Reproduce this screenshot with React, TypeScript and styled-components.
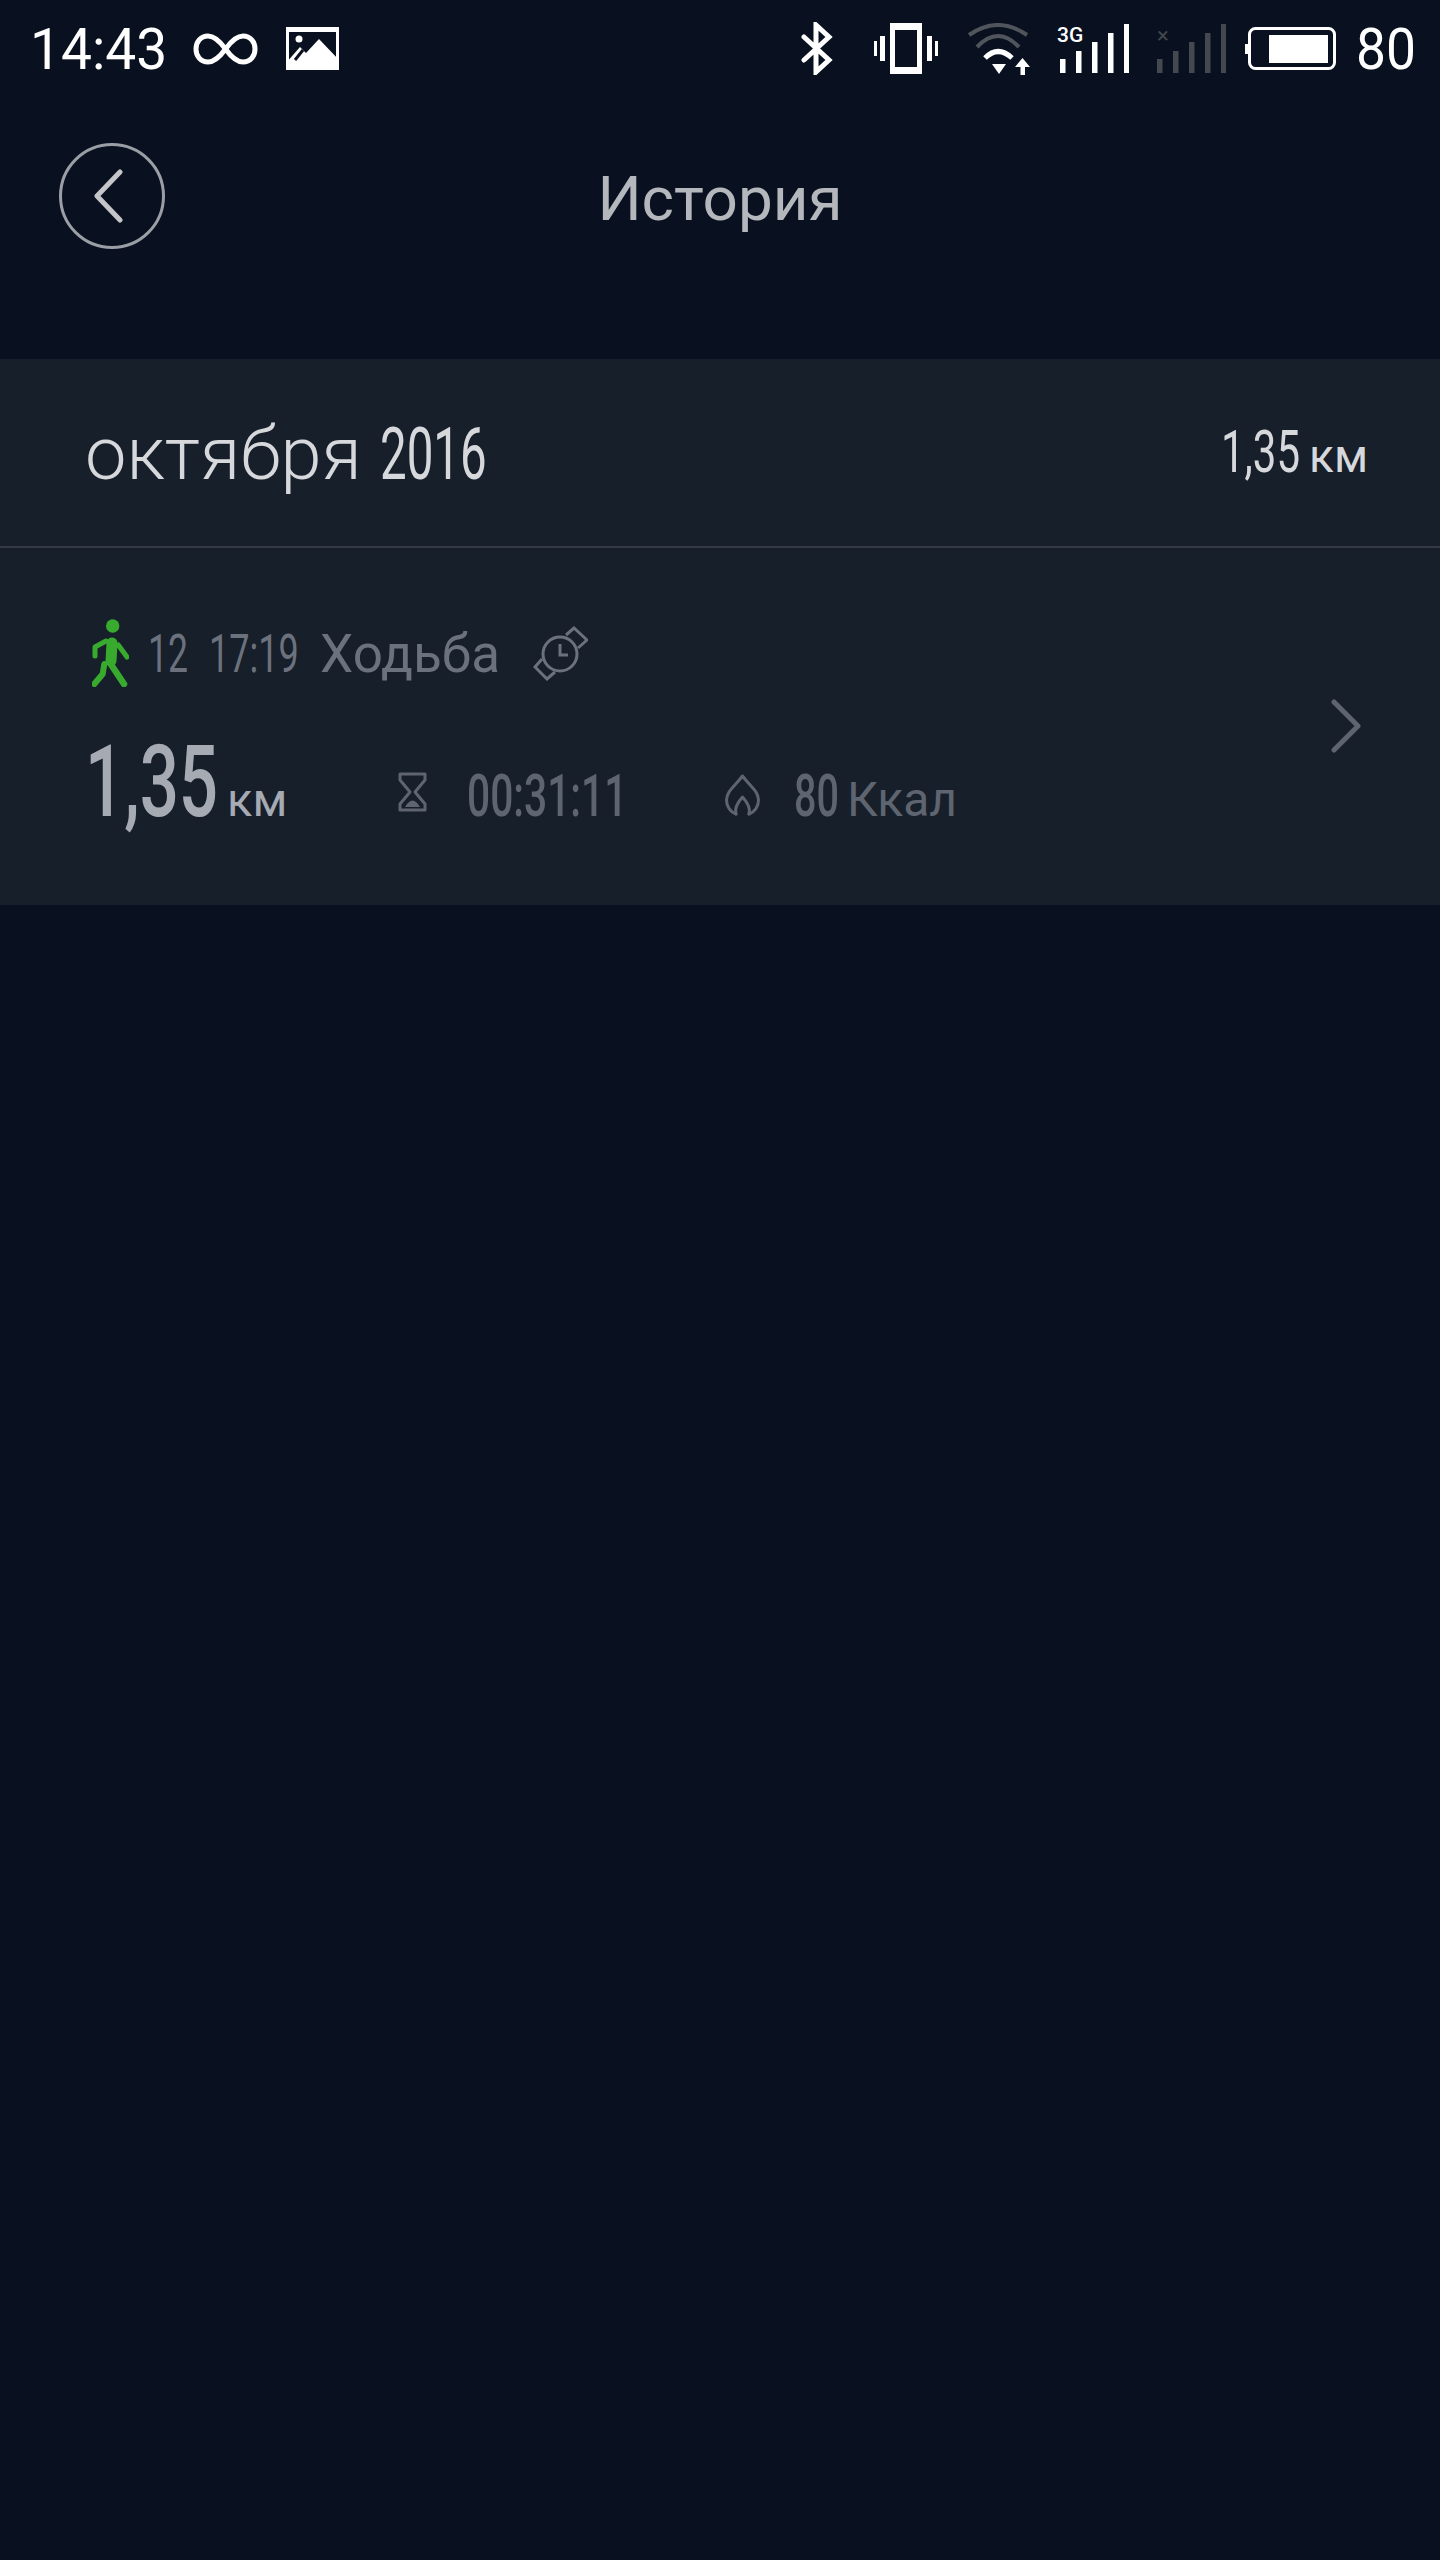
import React from "react";
import styled, { createGlobalStyle } from "styled-components";

const Global = createGlobalStyle`
  html, body { margin: 0; padding: 0; background: #09101f; }
  body { font-family: Roboto, "Noto Sans", sans-serif; }
`;

const Page = styled.div`
  width: 1440px;
  height: 2560px;
  background: #09101f;
  overflow: hidden;
`;

const StatusBar = styled.div`
  height: 97px;
  display: flex;
  align-items: center;
  justify-content: space-between;
  padding: 0 24px 0 30px;
  color: #fff;
`;

const StatusGroup = styled.div`
  display: flex;
  align-items: center;
`;

const Squeezed = styled.span<{ $w: number; $sx: number; $wt?: number }>`
  display: inline-block;
  width: ${(p) => p.$w}px;
  white-space: nowrap;
  font-weight: ${(p) => p.$wt ?? 500};
  transform: scaleX(${(p) => p.$sx});
  transform-origin: left center;
`;

const StatusText = styled.div`
  font-size: 58px;
  line-height: 60px;
`;

const StatusIcon = styled.svg<{ $ml?: number }>`
  display: block;
  flex: none;
  margin-left: ${(p) => p.$ml ?? 0}px;
`;

const Signal = styled.div<{ $ml: number }>`
  position: relative;
  flex: none;
  width: 72px;
  height: 50px;
  margin-left: ${(p) => p.$ml}px;
`;

const SignalBadge = styled.span<{ $dim?: boolean }>`
  position: absolute;
  left: ${(p) => (p.$dim ? 3 : 0)}px;
  top: ${(p) => (p.$dim ? 0 : -1)}px;
  font-size: ${(p) => (p.$dim ? 22 : 21)}px;
  font-weight: ${(p) => (p.$dim ? 400 : 500)};
  line-height: 24px;
  color: ${(p) => (p.$dim ? "#44484f" : "#fff")};
`;

const Header = styled.header`
  height: 262px;
  box-sizing: border-box;
  padding: 46px 59px 0;
  display: grid;
  grid-template-columns: 1fr auto 1fr;
  align-items: start;
`;

const BackButton = styled.div`
  width: 106px;
  height: 106px;
  box-sizing: border-box;
  border: 3px solid #9a9ea5;
  border-radius: 50%;
  display: flex;
  align-items: center;
  justify-content: center;
  padding-right: 6px;
`;

const Title = styled.h1`
  margin: 0;
  padding-top: 3px;
  font-size: 62px;
  font-weight: 400;
  line-height: 106px;
  color: #b4b7bc;
`;

const MonthBar = styled.div`
  height: 189px;
  box-sizing: border-box;
  background: #171f2b;
  border-bottom: 2px solid #333a46;
  padding: 3px 72px 0 85px;
  display: flex;
  align-items: center;
  justify-content: space-between;
  color: #d6d8dc;
`;

const MonthLabel = styled.div`
  display: flex;
  align-items: baseline;
  font-size: 74px;
  font-weight: 350;
  line-height: 100px;
`;

const MonthYear = styled.span`
  font-size: 73px;
  margin-left: 18px;
`;

const MonthTotal = styled.div`
  display: flex;
  align-items: baseline;
  font-size: 60px;
  line-height: 80px;
`;

const Unit = styled.span<{ $size: number; $ml: number }>`
  font-size: ${(p) => p.$size}px;
  margin-left: ${(p) => p.$ml}px;
`;

const ActivityRow = styled.div`
  height: 357px;
  box-sizing: border-box;
  background: #171f2b;
  padding: 70px 0 0 85px;
  position: relative;
`;

const TopLine = styled.div`
  height: 70px;
  display: flex;
  align-items: center;
  color: #6c727d;
  font-size: 53px;
  line-height: 70px;
`;

const Spaced = styled.span<{ $ml: number }>`
  margin-left: ${(p) => p.$ml}px;
`;

const TopIcon = styled.svg<{ $ml: number }>`
  display: block;
  flex: none;
  margin-left: ${(p) => p.$ml}px;
`;

const TopText = styled.span`
  position: relative;
  top: 1px;
`;

const BottomLine = styled.div`
  margin-top: 44px;
  display: flex;
  align-items: baseline;
  line-height: 100px;
`;

const Distance = styled.div`
  display: flex;
  align-items: baseline;
  color: #a6aab2;
  font-size: 100px;
  width: 313px;
`;

const Metric = styled.div<{ $w: number }>`
  display: flex;
  align-items: baseline;
  width: ${(p) => p.$w}px;
  color: #5f6570;
  font-size: 59px;
`;

const MetricIcon = styled.svg`
  display: block;
  flex: none;
  align-self: flex-end;
  margin-bottom: 34px;
`;

const Chevron = styled.svg`
  position: absolute;
  right: 79px;
  top: 151px;
`;

const Bars = ({ color }: { color: string }) => (
  <StatusIcon width={72} height={50} viewBox="0 0 72 50">
    {[35, 27, 18, 9, 0].map((top, i) => (
      <rect key={i} x={3 + i * 16} y={top} width={5.5} height={49 - top} fill={color} />
    ))}
  </StatusIcon>
);

export default function App() {
  return (
    <Page>
      <Global />
      <StatusBar>
        <StatusGroup>
          <StatusText>
            <Squeezed $w={137} $sx={0.95} $wt={400}>14:43</Squeezed>
          </StatusText>
          <StatusIcon $ml={26} width={65} height={32} viewBox="0 0 65 32" fill="none" stroke="#fff" strokeWidth={5}>
            <path d="M32.5 16C26 7 21 3 15 3 7.5 3 3 9 3 16s4.5 13 12 13c6 0 11-4 17.500-13C39 7 44 3 50 3c7.500 0 12 6 12 13s-4.500 13-12 13c-6 0-11-4-17.500-13Z" />
          </StatusIcon>
          <StatusIcon $ml={28} width={53} height={43} viewBox="0 0 53 43">
            <rect width={53} height={43} fill="#fff" />
            <rect x={3} y={5} width={47} height={28} fill="#09101f" />
            <path d="M0 43V36L14 20 20 26 33 12 53 33V43Z" fill="#fff" />
            <circle cx={13} cy={12} r={3.500} fill="#fff" />
            <path d="M9 33 17 23" stroke="#09101f" strokeWidth={3} />
          </StatusIcon>
        </StatusGroup>
        <StatusGroup>
          <StatusIcon width={32} height={53} viewBox="0 0 32 53" fill="none" stroke="#fff" strokeWidth={5} strokeLinecap="round">
            <path d="M3 15 28 38 15 50V3L28 15 3 38" />
          </StatusIcon>
          <StatusIcon $ml={41} width={64} height={51} viewBox="0 0 64 51" fill="#fff">
            <path d="M16 0H48V51H16ZM21 7V44H43V7Z" fillRule="evenodd" />
            <rect x={0} y={18} width={3} height={15} />
            <rect x={6} y={13} width={5} height={25} />
            <rect x={53} y={13} width={5} height={25} />
            <rect x={61} y={18} width={3} height={15} />
          </StatusIcon>
          <StatusIcon $ml={29} width={64} height={52} viewBox="0 0 64 52" fill="none">
            <path d="M2 12Q31-8 60 12" stroke="#50555c" strokeWidth={4} />
            <path d="M10 24Q31 2 52 24" stroke="#50555c" strokeWidth={4} />
            <path d="M18 35Q31 22 45 35" stroke="#fff" strokeWidth={5} />
            <path d="M25 41H39L32 51Z" fill="#fff" />
            <path d="M48 44 55.500 35 63 44H58V52H53.500V44Z" fill="#fff" />
          </StatusIcon>
          <Signal $ml={26}>
            <Bars color="#fff" />
            <SignalBadge>3G</SignalBadge>
          </Signal>
          <Signal $ml={25}>
            <Bars color="#44484f" />
            <SignalBadge $dim>×</SignalBadge>
          </Signal>
          <StatusIcon $ml={19} width={91} height={43} viewBox="0 0 91 43">
            <rect x={4.500} y={1.500} width={85} height={40} rx={6} fill="none" stroke="#fff" strokeWidth={3} />
            <rect x={0} y={17} width={3} height={10} fill="#fff" />
            <rect x={24} y={8} width={59} height={28} fill="#fff" />
          </StatusIcon>
          <StatusText>
            <Spaced $ml={20}>
              <Squeezed $w={60} $sx={0.92} $wt={400}>80</Squeezed>
            </Spaced>
          </StatusText>
        </StatusGroup>
      </StatusBar>

      <Header>
        <BackButton>
          <svg width={36} height={54} viewBox="0 0 36 54" fill="none" stroke="#c4c6ca" strokeWidth={5} strokeLinecap="round" strokeLinejoin="round">
            <path d="M29 3 6 27 29 51" />
          </svg>
        </BackButton>
        <Title>История</Title>
      </Header>

      <MonthBar>
        <MonthLabel>
          октября
          <MonthYear>
            <Squeezed $w={107} $sx={0.65} $wt={400}>2016</Squeezed>
          </MonthYear>
        </MonthLabel>
        <MonthTotal>
          <Squeezed $w={78} $sx={0.7} $wt={400}>1,35</Squeezed>
          <Unit $size={46} $ml={10}>км</Unit>
        </MonthTotal>
      </MonthBar>

      <ActivityRow>
        <TopLine>
          <TopIcon $ml={7} width={37} height={68} viewBox="0 0 37 68" fill="none" stroke="#38ab2e" strokeLinecap="round" strokeLinejoin="round">
            <circle cx={20.700} cy={7} r={6.700} fill="#38ab2e" stroke="none" />
            <path d="M20 24 19 42" strokeWidth={11} />
            <path d="M14 22 3 28 3 37" strokeWidth={5} />
            <path d="M26.300 26 35 38" strokeWidth={5} />
            <path d="M18 44 32 65" strokeWidth={6.500} />
            <path d="M12.300 45 10.700 55 2.300 65" strokeWidth={6} />
          </TopIcon>
          <TopText>
            <Spaced $ml={19}>
              <Squeezed $w={36} $sx={0.67} $wt={400}>12</Squeezed>
            </Spaced>
            <Spaced $ml={25}>
              <Squeezed $w={89} $sx={0.68} $wt={400}>17:19</Squeezed>
            </Spaced>
            <Spaced $ml={22}>Ходьба</Spaced>
          </TopText>
          <TopIcon $ml={33} width={55} height={55} viewBox="0 0 55 55" fill="none" stroke="#6c727d" strokeWidth={3}>
            <circle cx={27} cy={28} r={17} />
            <path d="M27 18V29H35" />
            <path d="M33 9 41 2 54 14 45 22" />
            <path d="M9 33 2 41 14 53 22 46" />
          </TopIcon>
        </TopLine>
        <BottomLine>
          <Distance>
            <Squeezed $w={132} $sx={0.69}>1,35</Squeezed>
            <Unit $size={47} $ml={10}>км</Unit>
          </Distance>
          <Metric $w={327}>
            <MetricIcon width={29} height={40} viewBox="0 0 29 40" fill="none" stroke="#5f6570" strokeWidth={3}>
              <path d="M2 2H27V8L17 20 27 32V38H2V32L12 20 2 8Z" strokeLinejoin="round" />
              <path d="M7 35Q14.500 22 22 35Z" fill="#5f6570" stroke="none" />
            </MetricIcon>
            <Spaced $ml={40}>
              <Squeezed $w={157} $sx={0.69}>00:31:11</Squeezed>
            </Spaced>
          </Metric>
          <Metric $w={240}>
            <MetricIcon width={35} height={42} viewBox="0 0 35 42" fill="none" stroke="#5f6570" strokeWidth={3} strokeLinecap="round" strokeLinejoin="round">
              <path d="M11 40C5 38 1.500 32 1.500 26 1.500 17 11 11 17.500 2 24 11 33.500 17 33.500 26 33.500 32 30 38 24 40" />
              <path d="M11 40C9 34 13 28 17.500 23 22 28 26 34 24 40" />
            </MetricIcon>
            <Spaced $ml={34}>
              <Squeezed $w={41} $sx={0.67}>80</Squeezed>
            </Spaced>
            <Unit $size={48} $ml={12}>Ккал</Unit>
          </Metric>
        </BottomLine>
        <Chevron width={30} height={54} viewBox="0 0 30 54" fill="none" stroke="#5f6570" strokeWidth={5} strokeLinecap="round" strokeLinejoin="round">
          <path d="M3 3 27 27 3 51" />
        </Chevron>
      </ActivityRow>
    </Page>
  );
}
